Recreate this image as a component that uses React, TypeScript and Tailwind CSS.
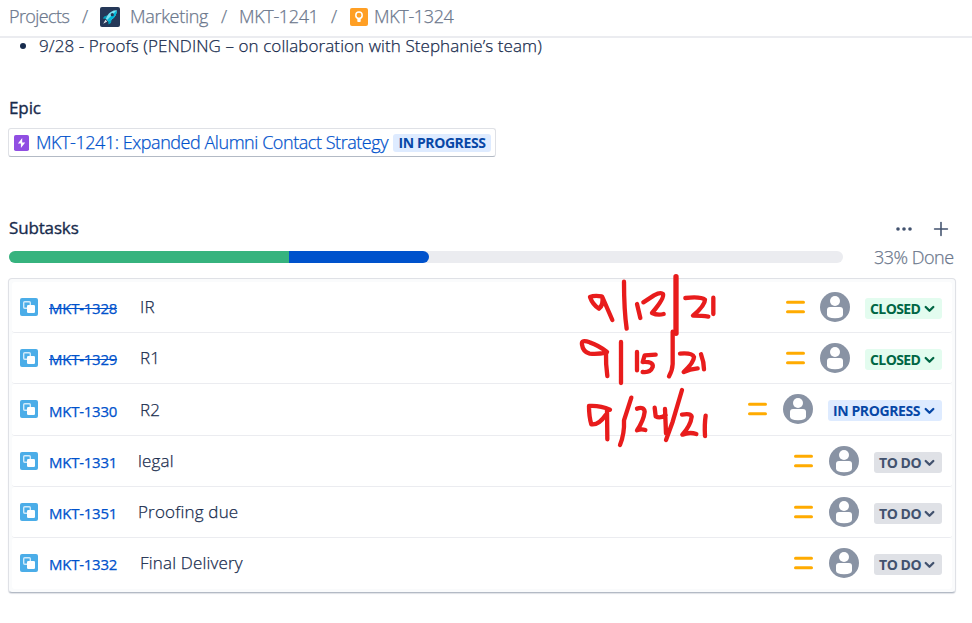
import { Plus } from 'lucide-react';
import clsx from 'clsx';

type Status = 'closed' | 'progress' | 'todo';

type Subtask = {
    id: string;
    title: string;
    status: Status;
    done?: boolean;
    titleClass: string;
}

const subtasks: Subtask[] = [
    { id: 'MKT-1328', title: 'IR', status: 'closed', done: true, titleClass: 'ml-[23px]' },
    { id: 'MKT-1329', title: 'R1', status: 'closed', done: true, titleClass: 'ml-[23px]' },
    { id: 'MKT-1330', title: 'R2', status: 'progress', titleClass: 'ml-[23px]' },
    { id: 'MKT-1331', title: 'legal', status: 'todo', titleClass: 'ml-[21px]' },
    { id: 'MKT-1351', title: 'Proofing due', status: 'todo', titleClass: 'ml-[21px]' },
    { id: 'MKT-1332', title: 'Final Delivery', status: 'todo', titleClass: 'ml-[23px]' },
];

const statusStyles: Record<Status, { label: string; className: string; textClass: string; gapClass: string }> = {
    closed: { label: 'CLOSED', className: 'w-[77px] bg-[#e3fcef] text-[#006644]', textClass: 'w-[51px] tracking-[-0.6px]', gapClass: 'mr-[15px]' },
    progress: { label: 'IN PROGRESS', className: 'w-[114px] bg-[#deebff] text-[#0747a6]', textClass: 'w-[88px] tracking-[-0.4px]', gapClass: 'mr-[16px]' },
    todo: { label: 'TO DO', className: 'w-[68px] bg-[#dfe1e6] text-[#42526e]', textClass: 'w-[42px] tracking-[-0.45px]', gapClass: 'mr-[16px]' },
};

function RocketIcon() {
    return (
        <svg width="20" height="20" viewBox="0 0 20 20">
            <rect width="20" height="20" rx="2" fill="#253858" />
            <path d="M7.5 8.2 4.2 9.4 2.8 11.6l3 .1ZM11.8 12.3l-.9 3.6-2.4 1.6-.2-3.2Z" fill="#00a3bf" />
            <path d="M16.8 3.2c-3.8-.2-7.2 1.8-9.4 5.2L5.7 11.7l2.7 2.7 3.3-1.8c3.3-2.2 5.2-5.5 5.1-9.4Z" fill="#79e2f2" />
            <path d="M16.8 3.2C16.9 7.1 15 10.4 11.7 12.6l-3.3 1.8-1.3-1.3Z" fill="#00b8d9" />
            <circle cx="12.3" cy="7.7" r="1.6" fill="#253858" />
            <path d="m5.5 12.8-2.3 4 4-2.3Z" fill="#dfe1e6" />
        </svg>
    )
}

function IdeaIcon() {
    return (
        <svg width="18" height="18" viewBox="0 0 18 18">
            <rect width="18" height="18" rx="2" fill="#ff9f24" />
            <circle cx="9" cy="7.2" r="3.2" fill="none" stroke="#fff" strokeWidth="1.5" />
            <path d="M7.3 10h3.4v3.2q0 .8-.8.8H8.1q-.8 0-.8-.8Z" fill="#fff" />
        </svg>
    )
}

function EpicIcon() {
    return (
        <svg width="15" height="16" viewBox="0 0 15 16">
            <rect width="15" height="16" rx="1.8" fill="#904ee2" />
            <path d="M8.2 3 3.9 8.5h3V13l4.3-5.5h-3Z" fill="#fff" />
        </svg>
    )
}

function SubtaskIcon() {
    return (
        <svg width="18" height="18" viewBox="0 0 18 18" className="shrink-0">
            <rect width="18" height="18" rx="2" fill="#4bade8" />
            <rect x="3.7" y="3.7" width="6.6" height="6.6" rx="1" fill="none" stroke="#d2ebfa" strokeWidth="1.4" />
            <rect x="7" y="7" width="8" height="8" rx="1.3" fill="#fff" />
        </svg>
    )
}

function PriorityIcon() {
    return (
        <svg width="19" height="14" viewBox="0 0 19 14" className="shrink-0">
            <path d="M1.500 2.300h16M1.500 11.800h16" stroke="#ffab00" strokeWidth="3" strokeLinecap="round" />
        </svg>
    )
}

function Avatar() {
    return (
        <svg width="30" height="30" viewBox="0 0 30 30" className="shrink-0">
            <circle cx="15" cy="15" r="15" fill="#8993a4" />
            <circle cx="15" cy="9" r="5" fill="#fff" />
            <path d="M7 18q0-3 3-3h10q3 0 3 3v4.500q0 3.800-8 3.800t-8-3.800Z" fill="#fff" />
        </svg>
    )
}

function StatusButton({ status }: { status: Status }) {
    const { label, className, textClass } = statusStyles[status];
    return (
        <button className={clsx('mt-[3px] ml-[15px] flex h-[21px] shrink-0 items-center rounded-[3px] pl-[5px] text-[14px] font-bold whitespace-nowrap [-webkit-text-stroke:0]', className)}>
            <span className={clsx('text-left', textClass)}>{label}</span>
            <svg width="11" height="8" viewBox="0 0 11 8" className="mt-[1px] ml-[3px]">
                <path d="m1.700 2 3.800 3.800L9.300 2" fill="none" stroke="currentColor" strokeWidth="2.3" strokeLinecap="round" strokeLinejoin="round" />
            </svg>
        </button>
    )
}

// red pen notes drawn over the rows
function DateNotes() {
    return (
        <svg width="160" height="190" viewBox="0 0 480 570" className="pointer-events-none absolute top-[-14px] left-[561px]" fill="none" stroke="#e81c1c" strokeWidth="13" strokeLinecap="round" strokeLinejoin="round">
            <path d="M95 94Q73 90 60 96Q68 119 87 131Q101 119 97 96L127 165" />
            <path d="M162 50Q162 135 170 191M201 117L211 159M220 112L252 91Q272 80 279 87Q284 99 246 144Q263 152 281 147" />
            <path strokeWidth="16" d="M318 35V205" />
            <path d="M346 99Q392 94 405 104Q405 121 369 152Q398 152 415 155M430 98V147" />
            <path d="M111 261Q88 242 59 232Q33 222 36 239Q39 261 59 266Q85 268 108 263Q107 297 112 333" />
            <path d="M153 231V354M201 261V316M257 269L224 271L218 291Q252 289 248 306Q241 324 218 321M308 200V297Q307 317 297 334M330 266Q367 263 372 276Q372 292 341 321Q359 312 383 310M393 268Q402 292 402 313" />
            <path d="M120 434Q91 421 57 423Q57 455 64 478Q86 481 107 450M111 432L112 523" />
            <path d="M184 398L162 466Q164 505 150 540M201 431Q222 424 224 440Q221 466 201 496Q214 491 226 495M254 428L257 454Q270 462 287 450M285 432L288 505M336 375L308 470L288 525M336 449Q363 444 365 455Q362 481 337 509Q359 500 379 507M407 452Q403 478 405 513" />
        </svg>
    )
}

export default function App() {
    return (
        <main className="h-[623px] w-[972px] overflow-hidden bg-white font-['Open_Sans',sans-serif] text-[18px] font-light text-[#172b4d] [-webkit-text-stroke:0.25px]">
            <header className="flex h-[38px] items-center border-b-2 border-[#ebecf0] pb-[3px] pl-[9px] whitespace-nowrap text-[#6b778c]">
                <span className="w-[61px] tracking-[-0.6px]">Projects</span>
                <span className="ml-[12px] w-[18px]">/</span>
                <RocketIcon />
                <span className="ml-[10px] w-[79px] tracking-[-0.3px]">Marketing</span>
                <span className="ml-[12px] w-[18px]">/</span>
                <span className="w-[80px] tracking-[-0.35px]">MKT-1241</span>
                <span className="ml-[12px] w-[19px]">/</span>
                <IdeaIcon />
                <span className="ml-[6px] tracking-[-0.35px]">MKT-1324</span>
            </header>

            <div className="flex h-[16px] items-center pl-[20px] text-[17px] whitespace-nowrap">
                <span className="h-[6px] w-[6px] rounded-full bg-[#172b4d]"></span>
                <p className="ml-[13px] tracking-[0.08px]">9/28 - Proofs (PENDING – on collaboration with Stephanie’s team)</p>
            </div>

            <h2 className="mt-[42px] pl-[9px] text-[17px] leading-[24px] font-normal tracking-[-0.1px] [-webkit-text-stroke:0.35px]">Epic</h2>
            <div className="mt-[8px] ml-[8px] flex h-[29px] w-[488px] items-center rounded-[3px] border border-[#dfe1e6] border-b-[#b3bac5] pl-[5px] whitespace-nowrap">
                <EpicIcon />
                <a className="ml-[7px] w-[357px] tracking-[-0.45px] text-[#0052cc]">MKT-1241: Expanded Alumni Contact Strategy</a>
                <span className="flex h-[18px] w-[98px] items-center justify-center rounded-[3px] bg-[#deebff] text-[14px] font-bold tracking-[-0.4px] text-[#0747a6] [-webkit-text-stroke:0]">IN PROGRESS</span>
            </div>

            <div className="mt-[59px] flex h-[24px] items-center pr-[20px] pl-[9px]">
                <h2 className="text-[17px] font-normal tracking-[-0.15px] [-webkit-text-stroke:0.35px]">Subtasks</h2>
                <svg width="16" height="4" viewBox="0 0 16 4" className="mt-[1px] ml-auto" fill="#42526e">
                    <circle cx="2" cy="2" r="1.8" />
                    <circle cx="8" cy="2" r="1.8" />
                    <circle cx="14" cy="2" r="1.8" />
                </svg>
                <Plus size={22} strokeWidth={1.7} className="mt-[1px] ml-[18px] text-[#42526e]" />
            </div>

            <div className="mt-[5px] flex h-[24px] items-center pl-[9px]">
                <div className="flex h-[12px] w-[834px] overflow-hidden rounded-full bg-[#ebecf0]">
                    <div className="w-[280px] bg-[#36b37e]"></div>
                    <div className="w-[140px] rounded-r-full bg-[#0052cc]"></div>
                </div>
                <span className="mt-[1px] ml-[31px] tracking-[-0.5px] whitespace-nowrap text-[#6b778c]">33% Done</span>
            </div>

            <div className="relative mt-[9px] ml-[8px] h-[315px] w-[948px] rounded-[4px] border border-[#dfe1e6] border-b-[#b3bac5] bg-[#fafbfc] px-[3px] pt-[2.8px] shadow-[0_1px_1px_#dfe1e6]">
                <div>
                    {subtasks.map((task) => (
                        <div key={task.id} className="flex h-[51.25px] items-center rounded-[3px] border-b border-[#ebecf0] bg-white pr-[10px] pl-[8px] whitespace-nowrap last:border-b-transparent">
                            <SubtaskIcon />
                            <a className={clsx('mt-[3px] ml-[11px] w-[68px] text-[15px] font-normal tracking-[-0.25px] text-[#0052cc]', task.done && 'line-through')}>{task.id}</a>
                            <span className={clsx('text-[17px] tracking-[0.18px]', task.titleClass)}>{task.title}</span>
                            <div className="ml-auto flex items-center">
                                <div className={statusStyles[task.status].gapClass}>
                                    <PriorityIcon />
                                </div>
                                <Avatar />
                                <StatusButton status={task.status} />
                            </div>
                        </div>
                    ))}
                </div>
                <DateNotes />
            </div>
        </main>
    )
}
